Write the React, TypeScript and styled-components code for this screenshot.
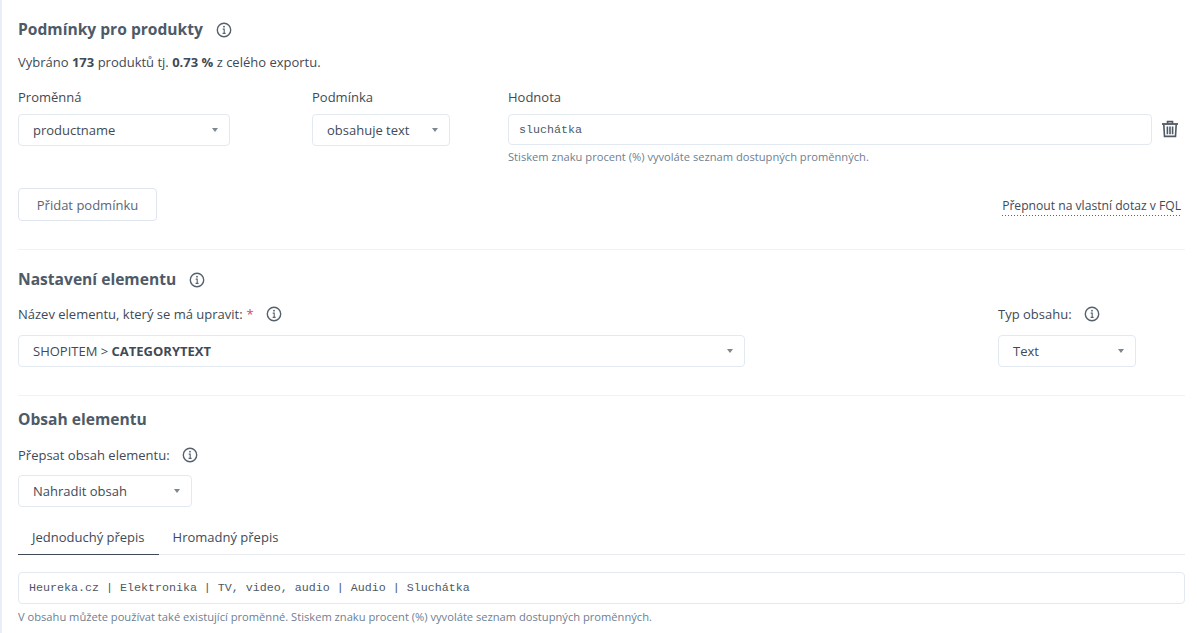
import React from "react";
import styled, { createGlobalStyle } from "styled-components";

const Global = createGlobalStyle`
  html, body { margin: 0; padding: 0; background: #fff; }
  body { font-family: "Open Sans", "Noto Sans", sans-serif; color: #3f4a56; font-size: 13px; }
`;

const Page = styled.div`
  width: 1197px;
  height: 633px;
  box-sizing: border-box;
  overflow: hidden;
  background: #fff;
  border-left: 2px solid #e8eef8;
  padding: 18px 12px 0 16px;
`;

const Heading = styled.div<{ $mt?: number }>`
  display: flex;
  align-items: center;
  height: 22px;
  gap: 13px;
  margin-top: ${(p) => p.$mt ?? 0}px;
  font-size: 15.6px;
  font-weight: 700;
  color: #4d5b69;
  svg { margin-top: 2px; }
`;

const InfoSvg = styled.svg`
  width: 16px;
  height: 16px;
  flex: none;
  color: #55616c;
`;

const Info = () => (
  <InfoSvg viewBox="0 0 16 16" fill="none" stroke="currentColor">
    <circle cx="8" cy="8" r="6.7" strokeWidth="1.4" />
    <circle cx="8" cy="4.7" r="0.9" fill="currentColor" stroke="none" />
    <path d="M6.7 7.1H8.2V11.2M6.6 11.4H9.6" strokeWidth="1.1" />
  </InfoSvg>
);

const Summary = styled.p`
  margin: 13px 0 0;
  line-height: 18px;
  font-size: 13px;
  color: #3f4a56;
  b { font-weight: 700; }
`;

const ConditionRow = styled.div`
  display: flex;
  margin-top: 17px;
`;

const Field = styled.div<{ $w?: number; $grow?: boolean; $ml?: number }>`
  width: ${(p) => (p.$w ? `${p.$w}px` : "auto")};
  flex: ${(p) => (p.$grow ? "1 1 0" : "none")};
  margin-left: ${(p) => p.$ml ?? 0}px;
`;

const Label = styled.div<{ $mt?: number }>`
  display: flex;
  align-items: center;
  gap: 12px;
  height: 18px;
  line-height: 18px;
  margin-top: ${(p) => p.$mt ?? 0}px;
  font-size: 13px;
  color: #3f4a56;
`;

const Star = styled.span`
  color: #d8475a;
  margin-left: -8px;
`;

const Select = styled.div<{ $mt?: number; $w?: number }>`
  display: flex;
  align-items: center;
  justify-content: space-between;
  box-sizing: border-box;
  height: 32px;
  width: ${(p) => (p.$w ? `${p.$w}px` : "100%")};
  margin-top: ${(p) => p.$mt ?? 8}px;
  padding: 0 11px 0 14px;
  border: 1px solid #e3e9f1;
  border-radius: 4px;
  font-size: 13px;
  color: #3f4a56;
  background: #fff;
  b { font-weight: 700; }
`;

const Caret = styled.span`
  width: 0;
  height: 0;
  flex: none;
  border-left: 3px solid transparent;
  border-right: 3px solid transparent;
  border-top: 4px solid #7d8790;
`;

const MonoInput = styled.div<{ $mt?: number; $h?: number }>`
  box-sizing: border-box;
  height: ${(p) => p.$h ?? 32}px;
  margin-top: ${(p) => p.$mt ?? 8}px;
  padding: 0 10px;
  display: flex;
  align-items: center;
  border: 1px solid #e3e9f1;
  border-radius: 4px;
  font-family: "Liberation Mono", monospace;
  font-size: 11.67px;
  color: #4d5966;
`;

const Hint = styled.div<{ $mt?: number }>`
  margin-top: ${(p) => p.$mt ?? 4}px;
  font-size: 11.15px;
  line-height: 16px;
  color: #6e8092;
`;

const TrashSvg = styled.svg`
  width: 18px;
  height: 18px;
  flex: none;
  margin: 32px 6px 0 9px;
  color: #4f5a65;
`;

const Trash = () => (
  <TrashSvg viewBox="0 0 18 18" fill="none" stroke="currentColor" strokeWidth="1.6">
    <path d="M1 4H17" strokeWidth="1.8" />
    <path d="M6.5 3.6V1.6H11.5V3.6" />
    <path d="M2.8 4.4L3.5 16.4H14.5L15.2 4.4" />
    <path d="M6.4 6.5V14.2M9 6.5V14.2M11.6 6.5V14.2" />
  </TrashSvg>
);

const ActionRow = styled.div`
  display: flex;
  align-items: flex-end;
  justify-content: space-between;
  margin-top: 23px;
`;

const Button = styled.div`
  box-sizing: border-box;
  height: 33px;
  width: 139px;
  display: flex;
  align-items: center;
  justify-content: center;
  border: 1px solid #dfe5ee;
  border-radius: 4px;
  font-size: 13px;
  color: #5a6672;
`;

const SwitchLink = styled.div`
  margin-right: 4px;
  margin-bottom: 5px;
  padding-bottom: 2px;
  font-size: 12.13px;
  line-height: 17px;
  color: #3f4a56;
  background-image: linear-gradient(to right, #5a6672 1px, transparent 1px);
  background-size: 3px 1px;
  background-repeat: repeat-x;
  background-position: left bottom;
`;

const Divider = styled.div<{ $mt: number }>`
  height: 1px;
  background: #f0f2f5;
  margin-top: ${(p) => p.$mt}px;
`;

const ElementRow = styled.div`
  display: flex;
  margin-top: 15px;
`;

const Tabs = styled.div`
  display: flex;
  margin-top: 12px;
  height: 36px;
  box-sizing: border-box;
  border-bottom: 1px solid #e8ebef;
`;

const Tab = styled.div<{ $active?: boolean }>`
  box-sizing: border-box;
  height: 36px;
  padding: 0 14px;
  display: flex;
  align-items: center;
  font-size: 13px;
  color: #3f4a56;
  border-bottom: 1px solid ${(p) => (p.$active ? "#3f4a56" : "transparent")};
`;

export default function App() {
  return (
    <Page>
      <Global />
      <Heading>
        Podmínky pro produkty
        <Info />
      </Heading>
      <Summary>
        Vybráno <b>173</b> produktů tj. <b>0.73 %</b> z celého exportu.
      </Summary>
      <ConditionRow>
        <Field $w={212}>
          <Label>Proměnná</Label>
          <Select>
            productname
            <Caret />
          </Select>
        </Field>
        <Field $w={138} $ml={82}>
          <Label>Podmínka</Label>
          <Select>
            obsahuje text
            <Caret />
          </Select>
        </Field>
        <Field $grow $ml={58}>
          <Label>Hodnota</Label>
          <MonoInput $h={31}>sluchátka</MonoInput>
          <Hint>Stiskem znaku procent (%) vyvoláte seznam dostupných proměnných.</Hint>
        </Field>
        <Trash />
      </ConditionRow>
      <ActionRow>
        <Button>Přidat podmínku</Button>
        <SwitchLink>Přepnout na vlastní dotaz v FQL</SwitchLink>
      </ActionRow>
      <Divider $mt={28} />
      <Heading $mt={18}>
        Nastavení elementu
        <Info />
      </Heading>
      <ElementRow>
        <Field $w={727}>
          <Label>
            Název elementu, který se má upravit: <Star>*</Star>
            <Info />
          </Label>
          <Select $mt={12}>
            <span>
              SHOPITEM &gt; <b>CATEGORYTEXT</b>
            </span>
            <Caret />
          </Select>
        </Field>
        <Field $w={138} $ml={253}>
          <Label>
            Typ obsahu:
            <Info />
          </Label>
          <Select $mt={12}>
            Text
            <Caret />
          </Select>
        </Field>
      </ElementRow>
      <Divider $mt={28} />
      <Heading $mt={12}>Obsah elementu</Heading>
      <Label $mt={16}>
        Přepsat obsah elementu:
        <Info />
      </Label>
      <Select $mt={11} $w={174}>
        Nahradit obsah
        <Caret />
      </Select>
      <Tabs>
        <Tab $active>Jednoduchý přepis</Tab>
        <Tab>Hromadný přepis</Tab>
      </Tabs>
      <MonoInput $mt={17}>Heureka.cz | Elektronika | TV, video, audio | Audio | Sluchátka</MonoInput>
      <Hint $mt={5}>V obsahu můžete používat také existující proměnné. Stiskem znaku procent (%) vyvoláte seznam dostupných proměnných.</Hint>
    </Page>
  );
}
